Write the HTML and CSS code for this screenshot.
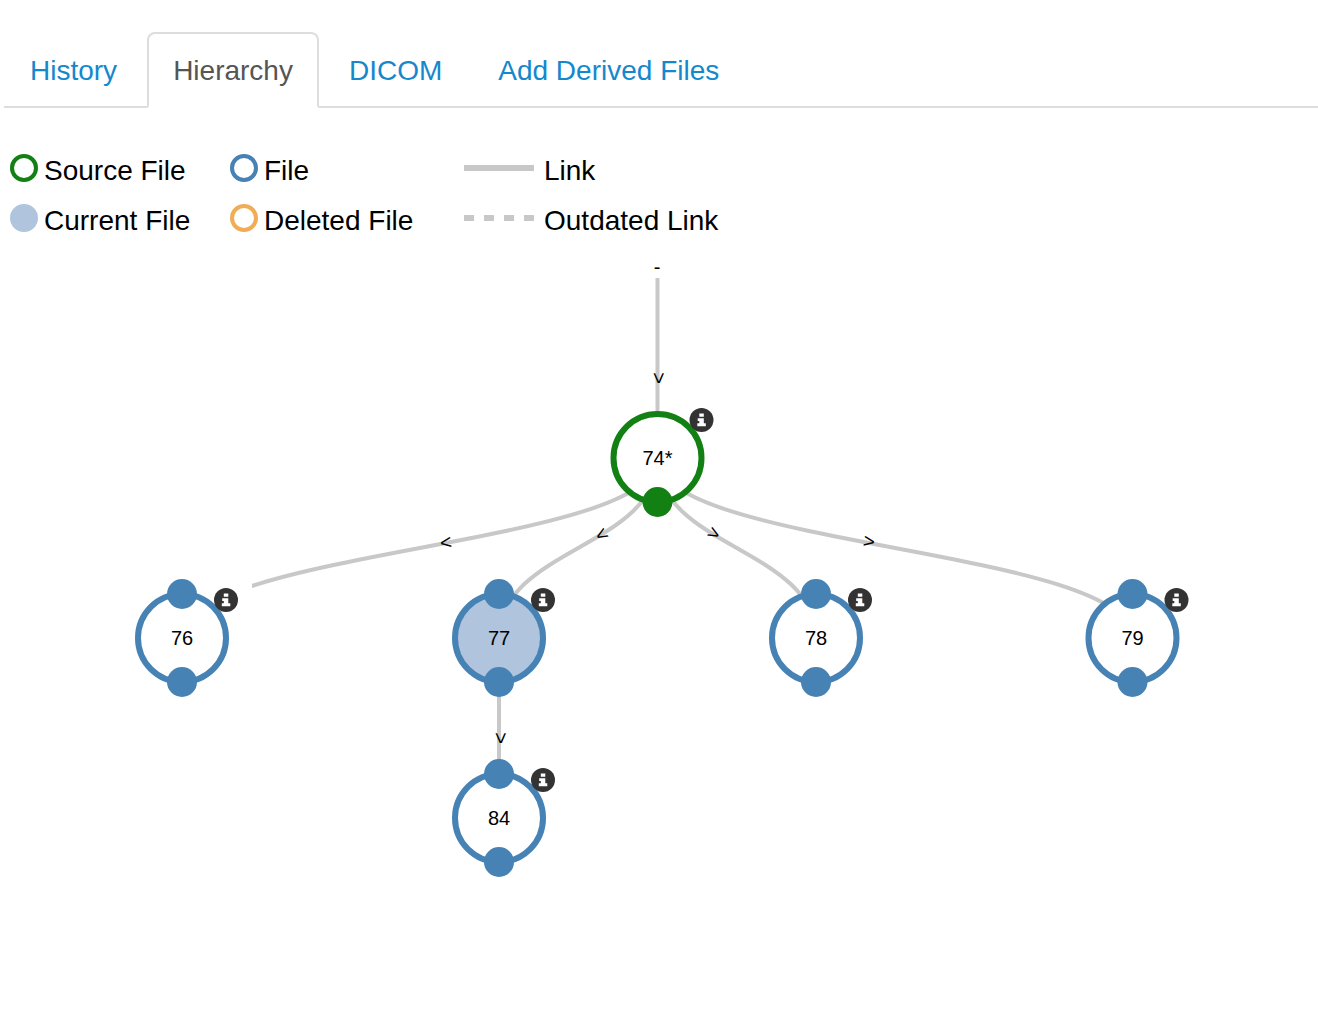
FILE: index.html
```html
<!DOCTYPE html>
<html lang="en">
<head>
<meta charset="utf-8">
<meta name="viewport" content="width=device-width, initial-scale=1">
<title>File hierarchy</title>
<link rel="stylesheet" href="styles.css">
</head>
<body>
<nav class="tabs" aria-label="File views">
  <a class="tab" href="#history">History</a>
  <a class="tab tab-active" href="#hierarchy" aria-current="page">Hierarchy</a>
  <a class="tab" href="#dicom">DICOM</a>
  <a class="tab" href="#derived">Add Derived Files</a>
</nav>
<main>
  <ul class="legend">
    <li class="legend-item"><span class="key key-source"></span>Source File</li>
    <li class="legend-item"><span class="key key-file"></span>File</li>
    <li class="legend-item legend-link"><span class="key-line"></span>Link</li>
    <li class="legend-item"><span class="key key-current"></span>Current File</li>
    <li class="legend-item"><span class="key key-deleted"></span>Deleted File</li>
    <li class="legend-item legend-link"><span class="key-line key-dashed"></span>Outdated Link</li>
  </ul>
  <svg class="tree" viewBox="0 250 1318 650" role="group" aria-label="File hierarchy">
    <defs>
      <clipPath id="left-edge"><rect x="252" y="250" width="1066" height="650"/></clipPath>
      <g id="info">
        <circle class="info-disc" r="12"/>
        <path class="info-glyph" d="M-2.200-6.500H2.300V-3.200H-2.200ZM-3.800-1.800H2.300V3.200H4.300V6.300H-4.200V3.200H-2.200V1.100H-3.800Z"/>
      </g>
    </defs>
    <g class="links">
      <path d="M657.500 278V458"/>
      <path clip-path="url(#left-edge)" d="M657.500 458C657.500 548 182 548 182 638"/>
      <path d="M657.500 458C657.500 548 499 548 499 638"/>
      <path d="M657.500 458C657.500 548 816 548 816 638"/>
      <path d="M657.500 458C657.500 548 1132.500 548 1132.500 638"/>
      <path d="M499 638V818"/>
    </g>
    <g class="label">
      <text x="657" y="274">-</text>
      <text y="7" transform="translate(659 378) rotate(90)">&gt;</text>
      <text y="7" transform="translate(446 543) rotate(172)">&gt;</text>
      <text y="7" transform="translate(602 535) rotate(150)">&gt;</text>
      <text y="7" transform="translate(714 533) rotate(30)">&gt;</text>
      <text y="7" transform="translate(869 541) rotate(9)">&gt;</text>
      <text y="7" transform="translate(501 738) rotate(90)">&gt;</text>
    </g>
    <g class="node source" transform="translate(657.500 458)">
      <circle class="ring" r="44"/><circle class="port" cy="44" r="15"/>
      <text class="label" y="7">74*</text>
      <a href="#info-74" aria-label="About file 74"><use href="#info" x="44" y="-38"/></a>
    </g>
    <g class="node" transform="translate(182 638)">
      <circle class="ring" r="44"/><circle class="port" cy="-44" r="15"/><circle class="port" cy="44" r="15"/>
      <text class="label" y="7">76</text>
      <a href="#info-76" aria-label="About file 76"><use href="#info" x="44" y="-38"/></a>
    </g>
    <g class="node current" transform="translate(499 638)">
      <circle class="ring" r="44"/><circle class="port" cy="-44" r="15"/><circle class="port" cy="44" r="15"/>
      <text class="label" y="7">77</text>
      <a href="#info-77" aria-label="About file 77"><use href="#info" x="44" y="-38"/></a>
    </g>
    <g class="node" transform="translate(816 638)">
      <circle class="ring" r="44"/><circle class="port" cy="-44" r="15"/><circle class="port" cy="44" r="15"/>
      <text class="label" y="7">78</text>
      <a href="#info-78" aria-label="About file 78"><use href="#info" x="44" y="-38"/></a>
    </g>
    <g class="node" transform="translate(1132.500 638)">
      <circle class="ring" r="44"/><circle class="port" cy="-44" r="15"/><circle class="port" cy="44" r="15"/>
      <text class="label" y="7">79</text>
      <a href="#info-79" aria-label="About file 79"><use href="#info" x="44" y="-38"/></a>
    </g>
    <g class="node" transform="translate(499 818)">
      <circle class="ring" r="44"/><circle class="port" cy="-44" r="15"/><circle class="port" cy="44" r="15"/>
      <text class="label" y="7">84</text>
      <a href="#info-84" aria-label="About file 84"><use href="#info" x="44" y="-38"/></a>
    </g>
  </svg>
</main>
</body>
</html>
```
FILE: styles.css
```css
* { box-sizing: border-box; }

body {
  margin: 0;
  background: #fff;
  color: #000;
  font: 28px/40px "Liberation Sans", Arial, sans-serif;
  font-kerning: none;
}

.tabs {
  display: flex;
  gap: 4px;
  margin: 32px 0 0 4px;
  border-bottom: 2px solid #ddd;
}

.tab {
  margin-bottom: -2px;
  padding: 17px 24px 15px;
  border: 2px solid transparent;
  border-radius: 8px 8px 0 0;
  color: #1588cc;
  text-decoration: none;
}

.tab-active {
  border-color: #ddd;
  border-bottom-color: #fff;
  background: #fff;
  color: #555;
}

.legend {
  display: grid;
  grid-template-columns: 220px 234px 1fr;
  margin: 38px 0 0;
  padding: 0 10px 4px;
  list-style: none;
}

.legend-item {
  display: flex;
  align-items: center;
  gap: 6px;
  height: 50px;
  white-space: nowrap;
}

.legend-link { gap: 10px; }

.key {
  width: 28px;
  height: 28px;
  margin-bottom: 6px;
  border: 4px solid steelblue;
  border-radius: 50%;
}

.key-source { border-color: #138013; }
.key-deleted { border-color: #f0ad55; }
.key-current { border-color: lightsteelblue; background: lightsteelblue; }

.key-line {
  width: 70px;
  height: 6px;
  margin-bottom: 6px;
  background: #c8c8c8;
}

.key-dashed {
  background: repeating-linear-gradient(90deg, #c8c8c8 0 10px, transparent 10px 20px);
}

.tree {
  display: block;
  width: 100%;
  height: auto;
}

.links { fill: none; stroke: #c8c8c8; stroke-width: 4px; }

.label { font-size: 20px; text-anchor: middle; }

.ring { fill: #fff; stroke: steelblue; stroke-width: 6px; }
.port { fill: steelblue; }
.source .ring { stroke: #138013; }
.source .port { fill: #138013; }
.current .ring { fill: lightsteelblue; }

.info-disc { fill: #333; }
.info-glyph { fill: #fff; }
```
